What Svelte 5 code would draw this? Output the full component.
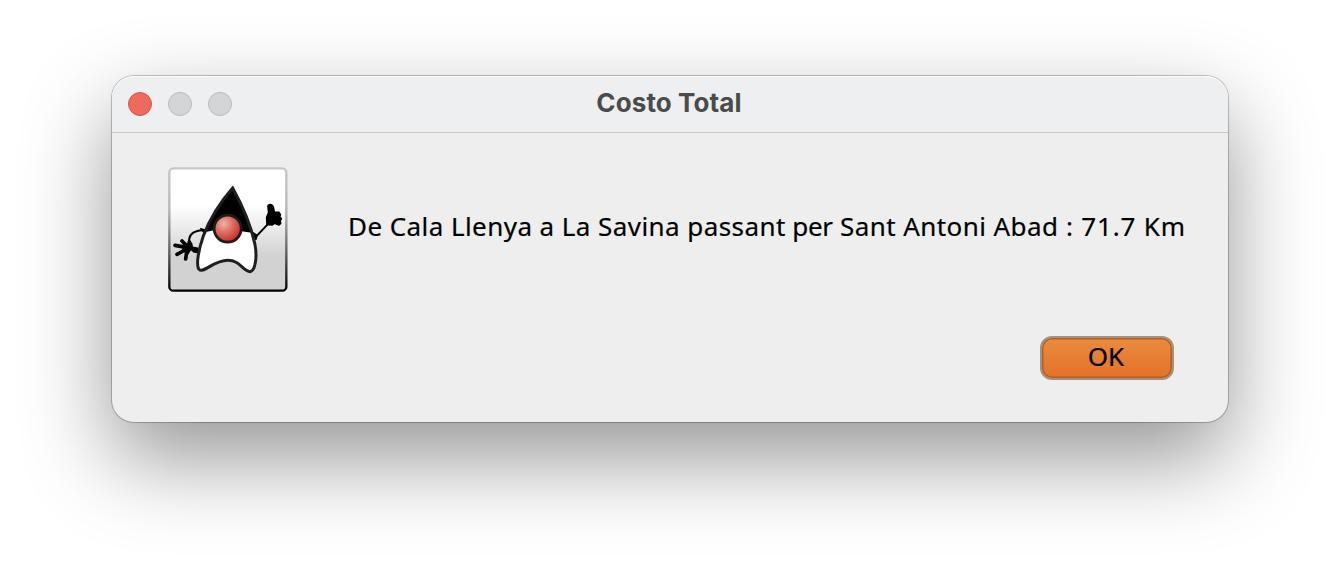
<script>
  const title = 'Costo Total';
  const route = 'De Cala Llenya a La Savina passant';
  const via = ' per';
  const stop = ' Sant Antoni Abad';
  const total = ' : 71.7 Km';
</script>

<main>
  <section class="window">
    <header>
      <div class="lights"><i class="close"></i><i></i><i></i></div>
      <h1>{title}</h1>
    </header>
    <div class="body">
      <svg class="duke" viewBox="24 21 360 375" aria-hidden="true">
        <defs>
          <linearGradient id="face" x1="0" y1="0" x2="0" y2="1">
            <stop offset="0" stop-color="#fff" /><stop offset=".3" stop-color="#fff" />
            <stop offset=".72" stop-color="#d2d2d2" /><stop offset="1" stop-color="#d2d2d2" />
          </linearGradient>
          <linearGradient id="edge" x1="0" y1="0" x2="0" y2="1">
            <stop offset="0" stop-color="#c8c8c8" /><stop offset=".35" stop-color="#b4b4b4" />
            <stop offset=".65" stop-color="#686868" /><stop offset="1" stop-color="#000" />
          </linearGradient>
          <radialGradient id="nose" cx=".36" cy=".32" r=".68">
            <stop offset="0" stop-color="#ecb5a5" /><stop offset=".45" stop-color="#dc7367" />
            <stop offset="1" stop-color="#cd2d28" />
          </radialGradient>
        </defs>
        <rect x="28" y="25" width="351" height="367" rx="12" fill="url(#face)" stroke="url(#edge)" stroke-width="7" />
        <g stroke="#000" fill="none" stroke-linecap="round" stroke-linejoin="round">
          <path d="M137 210 C105 211 87 218 87 245" stroke-width="6.500" />
          <path d="M122 206 L139 211 L132 218 Z" fill="#000" stroke-width="4" />
          <path d="M83 263 L45 256 M80 267 L51 283 M81 268 L77 297 M82 259 L66 243 M85 260 L88 246" stroke-width="11" />
          <path d="M70 256 L94 249 L97 262 L113 265 L113 277 L102 276 L92 267 L84 281 L69 270 Z" fill="#000" stroke-width="5" />
          <path d="M286 232 L323 193" stroke-width="6" />
          <path d="M279 218 L291 226 L289 237 L282 239 Z" fill="#000" stroke-width="4" />
          <path d="M321 193 L320 172 L326 158 L324 140 C323 132 337 131 340 142 L343 157 L357 157 L361 164 L359 170 L364 176 L360 183 L362 190 L357 195 L343 190 L336 195 Z" fill="#000" stroke-width="5" />
        </g>
        <path d="M136 211 L270 211 C284 244 290 274 286 305 C284 325 280 334 270 335 C252 334 244 301 203 301 C166 301 142 331 122 331 C101 330 116 260 136 211 Z" fill="#fff" />
        <path d="M218 84 C245 130 261 178 275 218 L245 214 L165 210 L134 217 C155 166 182 124 218 84 Z" fill="#000" />
        <path d="M218 84 C187 119 151 172 130 228 C116 268 108 311 116 327 C127 344 161 301 203 301 C242 301 248 334 270 335 C286 334 292 290 285 254 C274 200 251 144 218 84 Z" fill="none" stroke="#1f1f1f" stroke-width="9" stroke-linejoin="miter" />
        <circle cx="203" cy="206" r="40.500" fill="url(#nose)" stroke="#201b1b" stroke-width="8" />
      </svg>
      <p>{route}<span class="via">{via}</span>{stop}<span class="total">{total}</span></p>
      <button>OK</button>
    </div>
  </section>
</main>

<style>
  :global(body) { margin: 0; background: #fff; }
  main { height: 570px; box-sizing: border-box; padding: 76px 112px 0; overflow: hidden; }
  .window {
    width: 1116px;
    height: 346px;
    box-sizing: border-box;
    border-radius: 22px;
    background: #eee;
    box-shadow: 0 0 0 1px rgba(0, 0, 0, .2), 0 0 3px rgba(0, 0, 0, .08), 0 36px 88px rgba(0, 0, 0, .42);
  }
  header {
    height: 57px;
    box-sizing: border-box;
    display: grid;
    grid-template-columns: 1fr auto 1fr;
    align-items: center;
    padding: 0 16px;
    border-bottom: 1px solid #c7c8ca;
    border-radius: 22px 22px 0 0;
    background: #eeeff1;
    box-shadow: inset 0 1px 0 #fafbfc;
  }
  .lights { display: flex; gap: 16px; }
  .lights i {
    width: 24px;
    height: 24px;
    box-sizing: border-box;
    border: 1px solid #b9babb;
    border-radius: 50%;
    background: #d4d5d6;
  }
  .lights .close { background: #ed6a5e; border-color: #d85248; }
  h1 {
    margin: 0 2px 2px 0;
    font: 700 26px/30px Inter, sans-serif;
    letter-spacing: .1px;
    color: #4a4b4b;
    white-space: nowrap;
  }
  .body {
    display: grid;
    grid-template-columns: 120px 1fr;
    grid-template-rows: 125px 44px;
    column-gap: 60px;
    row-gap: 44px;
    padding: 34px 0 0 56px;
  }
  .duke { width: 120px; height: 125px; display: block; }
  p {
    margin: 41px 0 0;
    font: 400 26px/36px "Noto Sans", sans-serif;
    letter-spacing: .43px;
    -webkit-text-stroke: .2px #000;
    color: #000;
    white-space: nowrap;
  }
  .via { letter-spacing: -.3px; }
  .total { letter-spacing: .82px; }
  button {
    grid-column: 2;
    justify-self: end;
    width: 134px;
    height: 44px;
    margin: 0 54px 0 0;
    padding: 0 2px 5px 0;
    border: 2px solid #a8907d;
    border-radius: 12px;
    background: linear-gradient(#e98b3e, #e37228);
    box-shadow: inset 0 0 0 1.500px #ad6029;
    font: 400 26px/36px "Noto Sans", sans-serif;
    -webkit-text-stroke: .2px #000;
    color: #000;
  }
</style>
